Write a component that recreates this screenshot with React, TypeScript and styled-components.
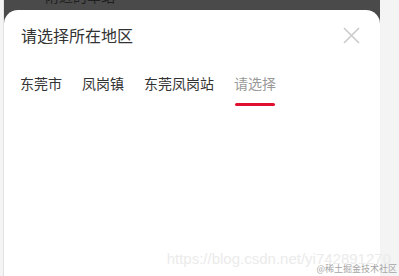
import React, { FC, useState } from 'react';
import styled, { createGlobalStyle } from 'styled-components';

const GlobalStyle = createGlobalStyle`
    html, body {
        margin: 0;
        padding: 0;
        background: #f4f4f4;
        font-family: "Noto Sans CJK SC", "Noto Sans", sans-serif;
    }
`;

const Page = styled.div`
    position: relative;
    display: flex;
    width: 399px;
    height: 276px;
    padding-left: 3px;
    box-sizing: border-box;
    overflow: hidden;
`;

const Phone = styled.div`
    display: flex;
    flex-direction: column;
    width: 376px;
    height: 276px;
    border-left: 1px solid #e2e2e2;
    background: #4a4a4a;
    overflow: hidden;
`;

const Behind = styled.div`
    height: 10px;
    padding-left: 41px;
    overflow: hidden;
`;

const BehindText = styled.div`
    margin-top: -14px;
    font-size: 14px;
    line-height: 20px;
    color: #1f1f1f;
`;

const Sheet = styled.div`
    flex: 1;
    background: #ffffff;
    border-radius: 14px 14px 0 0;
`;

const Header = styled.div`
    display: flex;
    align-items: center;
    justify-content: space-between;
    height: 50px;
    padding: 0 20px 0 17px;
`;

const Title = styled.div`
    font-size: 16px;
    color: #333333;
`;

const CloseButton = styled.button`
    display: flex;
    padding: 0;
    border: none;
    background: none;
    cursor: pointer;
`;

const Tabs = styled.div`
    display: flex;
    gap: 20px;
    padding: 13px 16px 0;
`;

const Tab = styled.div<{ active: boolean }>`
    position: relative;
    font-size: 14px;
    line-height: 20px;
    padding-bottom: 13px;
    color: ${({ active }) => (active ? '#999999' : '#333333')};
    cursor: pointer;
    &::after {
        content: '';
        display: ${({ active }) => (active ? 'block' : 'none')};
        position: absolute;
        left: 1px;
        right: 1px;
        top: 30px;
        height: 3px;
        border-radius: 2px;
        background: #e0112f;
    }
`;

const Watermark = styled.div`
    position: absolute;
    right: 8px;
    bottom: 9px;
    font-family: "Liberation Sans", sans-serif;
    font-size: 15px;
    color: #ebebeb;
    white-space: nowrap;
`;

const Credit = styled.div`
    position: absolute;
    right: 2px;
    bottom: 1px;
    font-size: 9px;
    color: #a5a5a5;
    white-space: nowrap;
`;

const tabs = ['东莞市', '凤岗镇', '东莞凤岗站', '请选择'];

const App: FC = () => {
    const [current, setCurrent] = useState(3);

    return (
        <>
            <GlobalStyle />
            <Page>
                <Phone>
                    <Behind>
                        <BehindText>附近的车站</BehindText>
                    </Behind>
                    <Sheet>
                        <Header>
                            <Title>请选择所在地区</Title>
                            <CloseButton aria-label="关闭">
                                <svg width="17" height="17" viewBox="0 0 17 17">
                                    <path d="M1 1L16 16M16 1L1 16" stroke="#cbcbcb" strokeWidth="1.6" fill="none" />
                                </svg>
                            </CloseButton>
                        </Header>
                        <Tabs>
                            {tabs.map((name, index) => (
                                <Tab key={index} active={index === current} onClick={() => setCurrent(index)}>
                                    {name}
                                </Tab>
                            ))}
                        </Tabs>
                    </Sheet>
                </Phone>
                <Watermark>https://blog.csdn.net/yi742891270</Watermark>
                <Credit>@稀土掘金技术社区</Credit>
            </Page>
        </>
    );
};

export default App;
